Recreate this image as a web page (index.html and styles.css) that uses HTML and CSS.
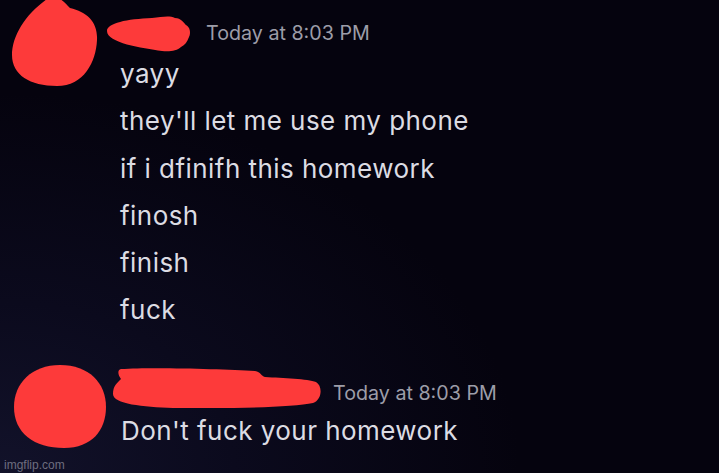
FILE: index.html
```html
<!DOCTYPE html>
<html lang="en">
<head>
    <meta charset="UTF-8">
    <meta name="viewport" content="width=device-width, initial-scale=1.0">
    <title>Chat</title>
    <link rel="stylesheet" href="styles.css">
</head>
<body>

    <main class="chat">
        <!-- Primeira mensagem -->
        <section class="message message-first">
            <svg class="avatar avatar-first" viewBox="0 0 86 86" width="86" height="86">
                <path d="M38,-3 C45,-6 52,2 58,8 C75,12 86,22 85,40 C84,62 72,86 45,86 C18,86 0,75 0,55 C0,35 15,12 38,-3 Z"/>
            </svg>
            <div class="content">
                <div class="header">
                    <svg class="name name-first" viewBox="0 0 84 37" width="84" height="37">
                        <path d="M0,16 C0,8 20,4 45,3 C55,2 62,0 68,3 C74,3 77,8 79,10 C83,12 84,18 82,22 C80,27 78,30 74,32 C70,36 62,37 55,36 C35,33 0,28 0,16 Z"/>
                    </svg>
                    <span class="time">Today at 8:03 PM</span>
                </div>
                <div class="line">yayy</div>
                <div class="line">they'll let me use my phone</div>
                <div class="line">if i dfinifh this homework</div>
                <div class="line">finosh</div>
                <div class="line">finish</div>
                <div class="line">fuck</div>
            </div>
        </section>

        <!-- Resposta -->
        <section class="message message-second">
            <svg class="avatar avatar-second" viewBox="0 0 92 83" width="92" height="83">
                <path d="M46,0 C75,0 92,18 92,42 C92,65 78,83 50,83 C20,83 0,68 0,42 C0,18 18,0 46,0 Z"/>
            </svg>
            <div class="content">
                <div class="header">
                    <svg class="name name-second" viewBox="0 0 208 40" width="208" height="40">
                        <path d="M8,1 C40,-1 110,1 142,3 C148,4 148,8 152,9 C170,10 195,11 203,14 C210,18 209,32 200,35 C180,39 120,41 60,40 C30,39 0,36 0,26 C0,18 4,15 8,11 C5,7 4,2 8,1 Z"/>
                    </svg>
                    <span class="time">Today at 8:03 PM</span>
                </div>
                <div class="line line-reply">Don't fuck your homework</div>
            </div>
        </section>
    </main>

    <div class="watermark">imgflip.com</div>

</body>
</html>
```

FILE: styles.css
```css
/* Corpo da página */
body {
    margin: 0;
    width: 719px;
    height: 473px;
    overflow: hidden;
    font-family: 'Inter', sans-serif;
    color: #dcdce3;
    background-color: #05030e;
    background-image: radial-gradient(ellipse 520px 380px at 0% 100%, #12122a 0%, #0b0a1d 45%, #05030e 100%);
    position: relative;
}

.chat {
    display: flex;
    flex-direction: column;
}

.message {
    display: flex;
    align-items: flex-start;
}

/* Avatares rabiscados */
.avatar path,
.name path {
    fill: #fd3a3a;
}

.avatar {
    flex-shrink: 0;
}

.avatar-first {
    margin-left: 12px;
    margin-right: 22px;
}

.message-second {
    margin-top: 37px;
}

.avatar-second {
    margin-left: 14px;
    margin-right: 15px;
    margin-top: -6px;
}

.content {
    display: flex;
    flex-direction: column;
}

.header {
    display: flex;
    align-items: center;
}

.message-first .header {
    height: 34px;
    padding-top: 16px;
}

.name-first {
    margin-left: -13px;
    margin-right: 15px;
}

.message-second .header {
    height: 38px;
    margin-top: 3px;
}

.name-second {
    align-self: flex-start;
    margin-top: -6px;
    margin-left: -8px;
    margin-right: 12px;
}

.time {
    font-size: 19.7px;
    color: #9d9da8;
}

.line {
    font-size: 26px;
    letter-spacing: 0.45px;
    line-height: 47.3px;
    white-space: nowrap;
}

.line-reply {
    line-height: 38px;
}

/* Marca d'água */
.watermark {
    position: absolute;
    left: 4px;
    bottom: 1px;
    font-family: 'Liberation Sans', Arial, sans-serif;
    font-size: 12px;
    color: #8c8c9c;
    opacity: 0.75;
}
```
